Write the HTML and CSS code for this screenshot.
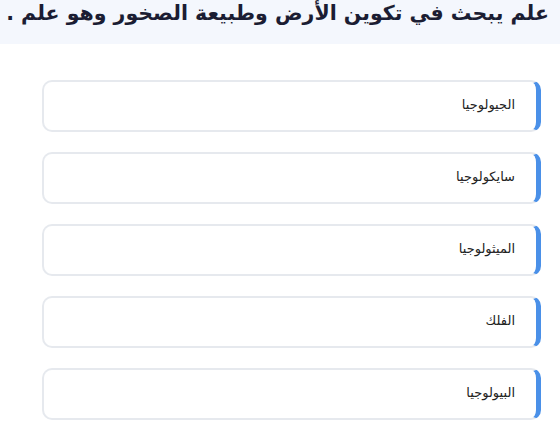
FILE: index.html
```html
<!DOCTYPE html>
<html lang="ar" dir="rtl">
<head>
    <meta charset="utf-8">
    <title>سؤال</title>
    <link rel="stylesheet" href="styles.css">
</head>
<body>
    <div class="question">علم يبحث في تكوين الأرض وطبيعة الصخور وهو علم .</div>
    <div class="answers">
        <div class="answer">الجيولوجيا</div>
        <div class="answer">سايكولوجيا</div>
        <div class="answer">الميثولوجيا</div>
        <div class="answer">الفلك</div>
        <div class="answer">البيولوجيا</div>
    </div>
</body>
</html>
```

FILE: styles.css
```css
body {
    margin: 0;
    background: #ffffff;
    font-family: "DejaVu Sans", sans-serif;
    color: #1b1d33;
}
.question {
    background: #f4f7fd;
    height: 44px;
    padding: 0 11px;
    font-size: 20.5px;
    font-weight: bold;
    line-height: 26px;
    box-sizing: border-box;
    white-space: nowrap;
}
.answers {
    display: flex;
    flex-direction: column;
    gap: 20px;
    margin: 36px 19px 0 42px;
}
.answer {
    height: 52px;
    box-sizing: border-box;
    display: flex;
    align-items: center;
    padding-right: 21px;
    padding-bottom: 3px;
    border: 2px solid #e6e9ee;
    border-right: 5px solid #4a90e8;
    border-radius: 10px;
    font-family: "Liberation Sans", "DejaVu Sans", sans-serif;
    font-size: 13px;
    color: #222;
}
```
